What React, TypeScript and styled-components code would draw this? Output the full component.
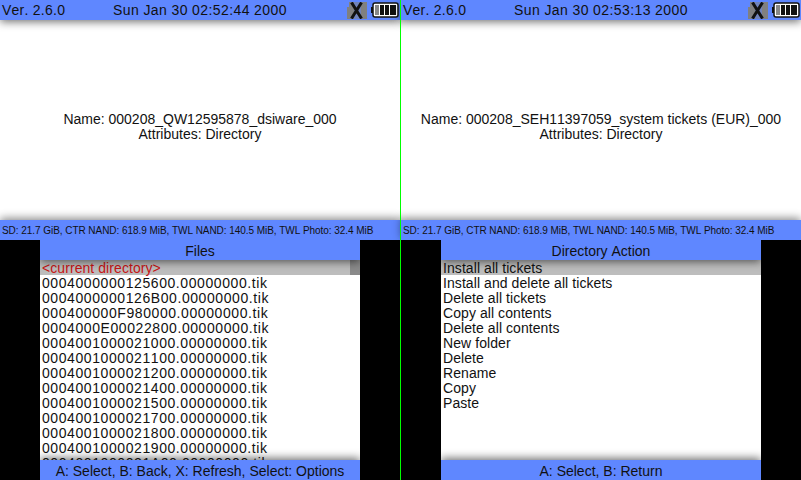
import React from "react";
import styled, { createGlobalStyle } from "styled-components";

const GlobalStyle = createGlobalStyle`
  html, body {
    margin: 0;
    padding: 0;
    background: #000;
    overflow: hidden;
  }
  body {
    font-family: "Liberation Sans", Arial, sans-serif;
    font-kerning: none;
    color: #111;
  }
`;

const leftFiles = [
  "0004000000125600.00000000.tik",
  "0004000000126B00.00000000.tik",
  "000400000F980000.00000000.tik",
  "0004000E00022800.00000000.tik",
  "0004001000021000.00000000.tik",
  "0004001000021100.00000000.tik",
  "0004001000021200.00000000.tik",
  "0004001000021400.00000000.tik",
  "0004001000021500.00000000.tik",
  "0004001000021700.00000000.tik",
  "0004001000021800.00000000.tik",
  "0004001000021900.00000000.tik",
  "0004001000021A00.00000000.tik",
];

const actions = [
  "Install and delete all tickets",
  "Delete all tickets",
  "Copy all contents",
  "Delete all contents",
  "New folder",
  "Delete",
  "Rename",
  "Copy",
  "Paste",
];

const storage =
  "SD: 21.7 GiB, CTR NAND: 618.9 MiB, TWL NAND: 140.5 MiB, TWL Photo: 32.4 MiB";

const BatteryIcon = () => (
  <svg width="28" height="16" viewBox="0 0 28 16">
    <rect x="0" y="5" width="2" height="6" fill="#111" />
    <rect x="2" y="1" width="25" height="14" rx="2" fill="#fff" stroke="#111" strokeWidth="1.5" />
    <rect x="4" y="3" width="4" height="10" fill="#888" />
    <rect x="9" y="3" width="4" height="10" fill="#111" />
    <rect x="14" y="3" width="4" height="10" fill="#111" />
    <rect x="19" y="3" width="6" height="10" fill="#111" />
  </svg>
);

const WifiOff = () => (
  <svg width="20" height="17" viewBox="0 0 20 17">
    <rect x="0" y="5" width="3" height="12" fill="#808080" />
    <rect x="2" y="0" width="5" height="17" fill="#808080" />
    <rect x="7" y="0" width="7" height="17" fill="#808080" opacity="0.55" />
    <rect x="14" y="0" width="6" height="17" fill="#808080" />
    <path d="M4.5 0.5 L14.5 16.5 M14.5 0.5 L4.5 16.5" stroke="#111" strokeWidth="3" fill="none" />
  </svg>
);

const App = () => {
  return (
    <>
      <GlobalStyle />
      <Stage>
        <Screen>
          <TopScreen>
            <TopBar>
              <Version>Ver. 2.6.0</Version>
              <Clock>Sun Jan 30 02:52:44 2000</Clock>
              <Tray>
                <WifiOff />
                <BatteryIcon />
              </Tray>
            </TopBar>
            <Info>
              <div>Name: 000208_QW12595878_dsiware_000</div>
              <div>Attributes: Directory</div>
            </Info>
            <StorageBar>{storage}</StorageBar>
          </TopScreen>
          <BottomScreen>
            <Panel>
              <PanelHeader>Files</PanelHeader>
              <List>
                <Row $selected $accent>
                  &lt;current directory&gt;
                  <ScrollThumb />
                </Row>
                {leftFiles.map((f) => (
                  <Row key={f} $wide>
                    {f}
                  </Row>
                ))}
              </List>
              <PanelFooter>A: Select, B: Back, X: Refresh, Select: Options</PanelFooter>
            </Panel>
          </BottomScreen>
        </Screen>
        <Divider />
        <Screen>
          <TopScreen>
            <TopBar>
              <Version>Ver. 2.6.0</Version>
              <Clock>Sun Jan 30 02:53:13 2000</Clock>
              <Tray>
                <WifiOff />
                <BatteryIcon />
              </Tray>
            </TopBar>
            <Info>
              <div>Name: 000208_SEH11397059_system tickets (EUR)_000</div>
              <div>Attributes: Directory</div>
            </Info>
            <StorageBar>{storage}</StorageBar>
          </TopScreen>
          <BottomScreen>
            <Panel>
              <PanelHeader>Directory Action</PanelHeader>
              <List>
                <Row $selected>Install all tickets</Row>
                {actions.map((a) => (
                  <Row key={a}>{a}</Row>
                ))}
              </List>
              <PanelFooter>A: Select, B: Return</PanelFooter>
            </Panel>
          </BottomScreen>
        </Screen>
      </Stage>
    </>
  );
};

export default App;

const Stage = styled.div`
  display: flex;
  width: 801px;
  height: 480px;
`;

const Screen = styled.div`
  display: flex;
  flex-direction: column;
  width: 400px;
  height: 480px;
`;

const Divider = styled.div`
  width: 1px;
  background: #00ff00;
  position: relative;
  z-index: 5;
`;

const TopScreen = styled.div`
  display: flex;
  flex-direction: column;
  height: 240px;
  background: #fff;
`;

const TopBar = styled.div`
  display: flex;
  align-items: center;
  height: 20px;
  flex: none;
  padding: 0 1px 0 2px;
  background: #5f87ff;
  box-shadow: 0 2px 8px rgba(0, 0, 0, 0.55);
  font-size: 14px;
  letter-spacing: 0.4px;
  position: relative;
`;

const Version = styled.span`
  width: 111px;
  letter-spacing: 0.25px;
`;

const Clock = styled.span`
  flex: 1;
`;

const Tray = styled.div`
  display: flex;
  align-items: center;
  gap: 4px;
`;

const Info = styled.div`
  flex: 1;
  display: flex;
  flex-direction: column;
  align-items: center;
  justify-content: center;
  padding-top: 14px;
  font-size: 14px;
  line-height: 15px;
`;

const StorageBar = styled.div`
  height: 20px;
  flex: none;
  line-height: 21px;
  padding-left: 2px;
  background: #5f87ff;
  box-shadow: 0 -2px 8px rgba(0, 0, 0, 0.45);
  font-size: 10px;
  letter-spacing: -0.05px;
  white-space: nowrap;
  position: relative;
`;

const BottomScreen = styled.div`
  display: flex;
  justify-content: center;
  height: 240px;
  background: #000;
`;

const Panel = styled.div`
  display: flex;
  flex-direction: column;
  width: 320px;
  background: #fff;
  overflow: hidden;
`;

const PanelHeader = styled.div`
  height: 20px;
  flex: none;
  line-height: 22px;
  text-align: center;
  background: #5f87ff;
  box-shadow: 0 2px 8px rgba(0, 0, 0, 0.55);
  font-size: 14px;
  position: relative;
  z-index: 1;
`;

const List = styled.div`
  flex: 1;
  min-height: 0;
  overflow: hidden;
`;

const Row = styled.div<{ $selected?: boolean; $accent?: boolean; $wide?: boolean }>`
  position: relative;
  height: 15px;
  line-height: 16px;
  padding-left: 2px;
  font-size: 14px;
  letter-spacing: ${(p) => (p.$wide ? "0.58px" : "0.07px")};
  white-space: nowrap;
  background: ${(p) => (p.$selected ? "#bdbdbd" : "transparent")};
  color: ${(p) => (p.$accent ? "#c81414" : "#111")};
`;

const ScrollThumb = styled.div`
  position: absolute;
  top: 0;
  right: 0;
  width: 10px;
  height: 15px;
  background: #8a8a8a;
`;

const PanelFooter = styled.div`
  height: 20px;
  flex: none;
  line-height: 22px;
  text-align: center;
  background: #5f87ff;
  box-shadow: 0 -2px 8px rgba(0, 0, 0, 0.55);
  font-size: 14px;
  position: relative;
`;
